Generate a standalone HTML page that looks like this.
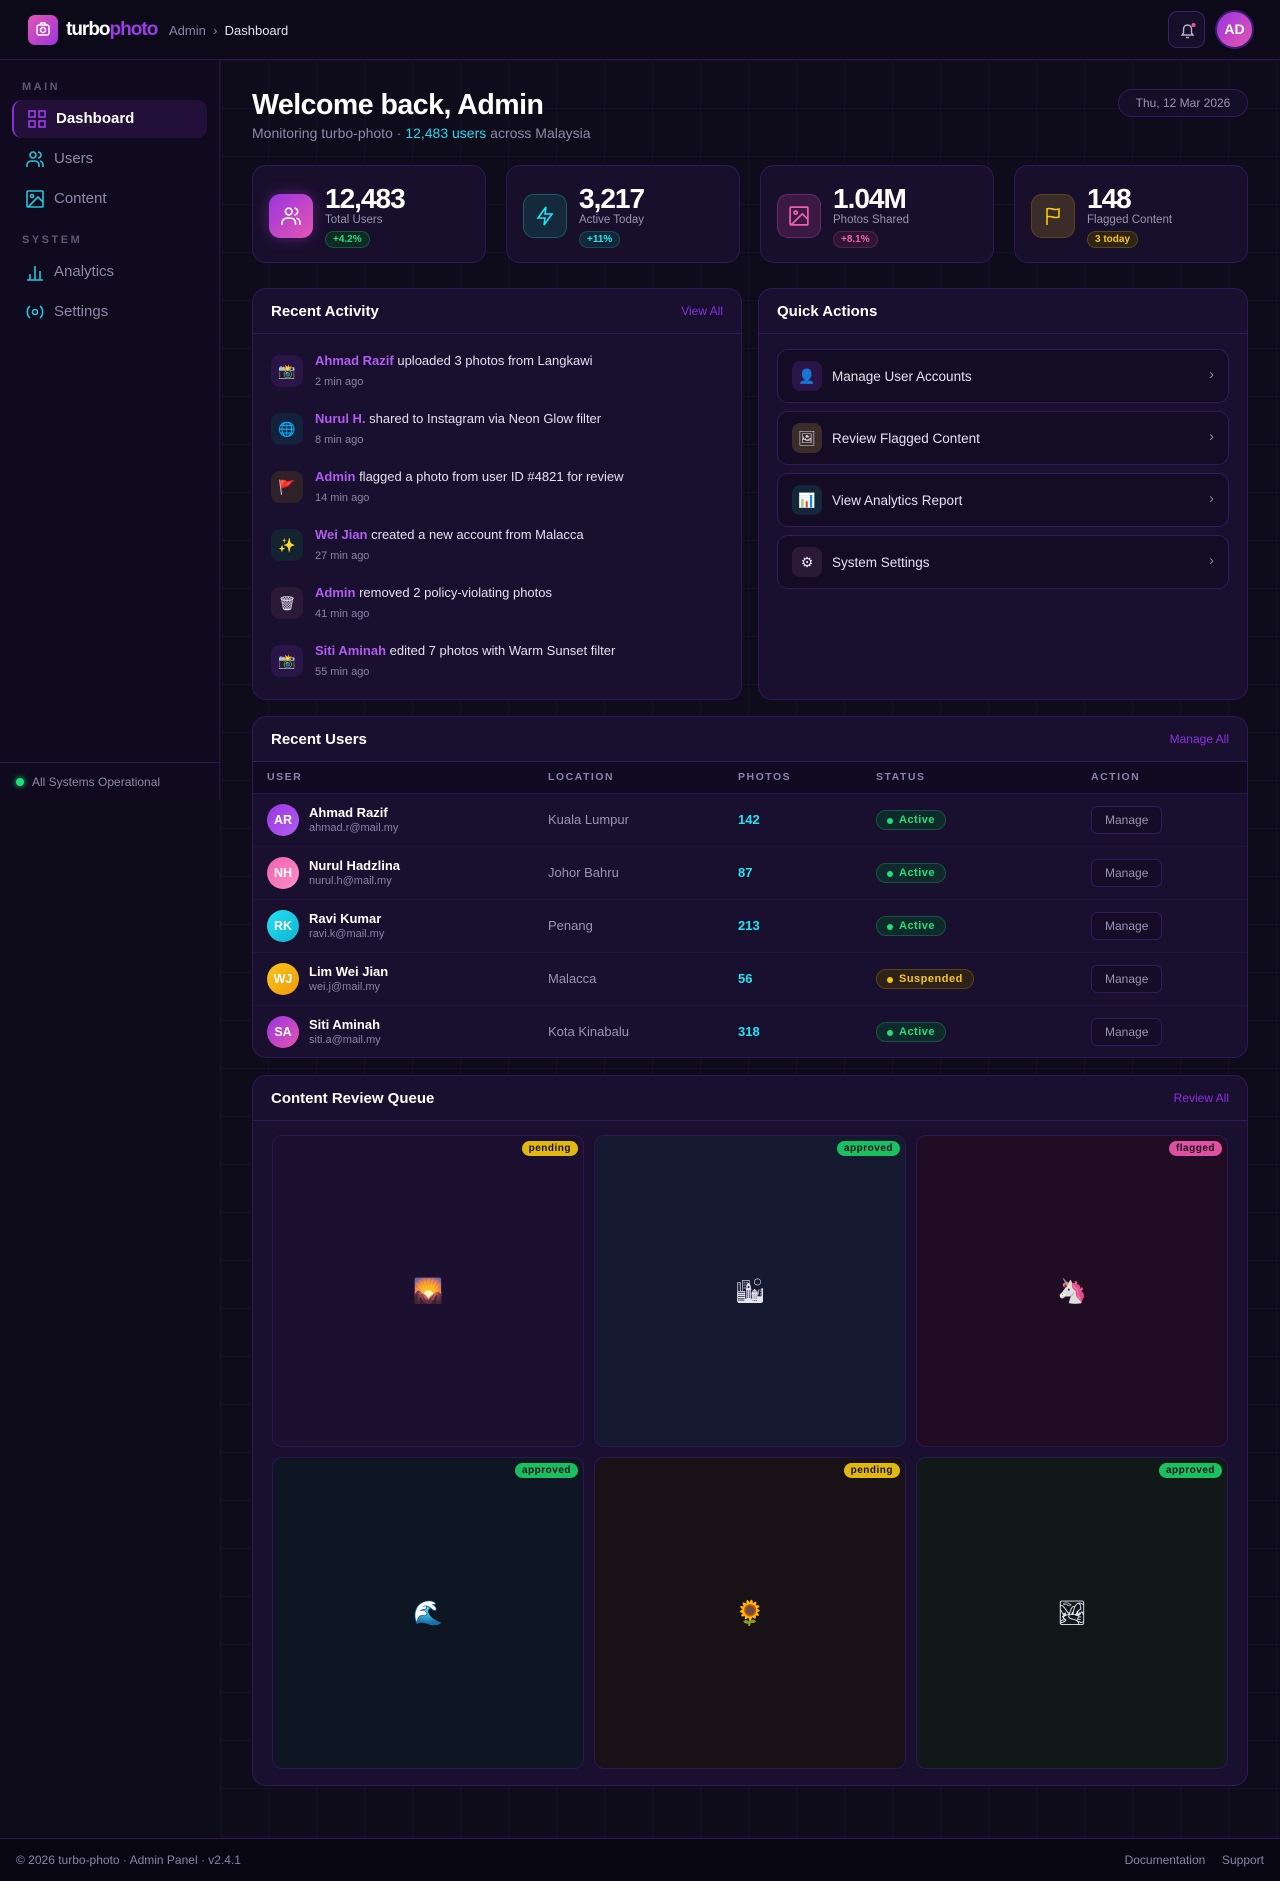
<!DOCTYPE html>
<html><head><meta charset="utf-8">
<style>
*{box-sizing:border-box;margin:0;padding:0}
body{width:1280px;height:1881px;background:#0e0b1b;font-family:"Liberation Sans","DejaVu Sans",sans-serif;color:#e8e4f4;position:relative;overflow:hidden}
.grid{position:absolute;left:220px;top:60px;right:0;bottom:43px;background-image:linear-gradient(rgba(90,50,160,.10) 1px,transparent 1px),linear-gradient(90deg,rgba(90,50,160,.10) 1px,transparent 1px);background-size:48px 48px}
header{position:absolute;left:0;top:0;width:1280px;height:60px;background:#0c0918;border-bottom:1px solid #2c1656}
.logo{position:absolute;left:28px;top:15px;width:30px;height:30px;border-radius:7px;background:linear-gradient(135deg,#e456b0,#9b34e0)}
.brand{position:absolute;left:66px;top:19px;font-size:19px;font-weight:bold;letter-spacing:-1px;color:#fff}
.brand span{color:#9b3ee8}
.crumb{position:absolute;left:169px;top:23px;font-size:13px;color:#8a82a6}
.crumb b{font-weight:normal;color:#e4e0f0}
.bell{position:absolute;left:1168px;top:11px;width:37px;height:37px;border-radius:9px;border:1px solid #3a2166;background:#160f2a}
.av{position:absolute;left:1215px;top:10px;width:39px;height:39px;border-radius:50%;background:linear-gradient(135deg,#9b34e0,#e456b0);border:2px solid #3b1c6e;font-weight:bold;font-size:14px;text-align:center;line-height:35px;color:#fff}
.side{position:absolute;left:0;top:60px;width:220px;height:740px;background:#0f0a1e;border-right:1px solid #24133f}
.sl{position:absolute;left:22px;font-size:11px;font-weight:bold;letter-spacing:2.5px;color:#5e5673}
.si{position:absolute;left:12px;width:195px;height:38px;font-size:15px;color:#8f88a8;padding-left:42px;line-height:38px}
.si svg{position:absolute;left:14px;top:10px}
.si.act{background:#221038;border-left:2px solid #8a2ee0;border-radius:10px;color:#fff;font-weight:bold}
.sfoot{position:absolute;left:0;top:702px;width:220px;border-top:1px solid #2c1656;height:38px;font-size:12px;color:#8f88a8;padding:12px 0 0 32px}
.sfoot i{position:absolute;left:16px;top:15px;width:8px;height:8px;border-radius:50%;background:#1fe07a;box-shadow:0 0 6px #1fe07a}
h1{position:absolute;left:252px;top:89px;font-size:28.5px;color:#fff;letter-spacing:-.5px}
.sub{position:absolute;left:252px;top:125px;font-size:14px;color:#8f88a8}
.sub span{color:#22d9ee}
.date{position:absolute;left:1118px;top:89px;width:130px;height:28px;border:1px solid #34195f;border-radius:14px;background:#150e28;font-size:12px;color:#9a93b2;text-align:center;line-height:26px}
.card{position:absolute;top:165px;width:234px;height:98px;border:1px solid #2e1858;border-radius:14px;background:#170f2c}
.card .ic{position:absolute;left:16px;top:28px;width:44px;height:44px;border-radius:11px;display:flex;align-items:center;justify-content:center}
.card .n{position:absolute;left:72px;top:17px;font-size:28px;font-weight:bold;color:#fff;letter-spacing:-1px}
.card .l{position:absolute;left:72px;top:48px;font-size:11.5px;color:#9a93b2}
.card .b{position:absolute;left:72px;top:65px;font-size:10px;font-weight:bold;padding:2px 7px;border-radius:9px}
.panel{position:absolute;border:1px solid #2e1858;border-radius:14px;background:#190f2e;overflow:hidden}
.ph{height:45px;border-bottom:1px solid #33195f;padding:0 18px;display:flex;align-items:center;justify-content:space-between}
.ph h3{font-size:15px;color:#fff}
.ph a{font-size:12px;color:#8a2ee0}
.item{position:absolute;left:18px;width:460px}
.item .ai{position:absolute;left:0;top:0;width:32px;height:32px;border-radius:9px;font-size:14px;text-align:center;line-height:32px}
.item .t{position:absolute;left:44px;top:-2px;font-size:13px;color:#e4e0f0;white-space:nowrap}
.item .t b{color:#b05cf0}
.item .tm{position:absolute;left:44px;top:21px;font-size:11px;color:#8a82a6}
.qa{position:absolute;left:18px;width:452px;height:54px;border:1px solid #33195f;border-radius:11px;background:#130c24}
.qa .qi{position:absolute;left:14px;top:11px;width:30px;height:30px;border-radius:8px;text-align:center;line-height:30px;font-size:14px}
.qa .qt{position:absolute;left:54px;top:19px;font-size:13.5px;color:#e4e0f0}
.qa .ch{position:absolute;right:14px;top:16px;font-size:15px;color:#8a82a6}
table{border-collapse:collapse;width:100%}
th{height:31px;background:#110b21;font-size:10.5px;letter-spacing:1.5px;color:#8a82a6;text-align:left;font-weight:bold;border-bottom:1px solid #2a1650}
td{height:53px;border-bottom:1px solid #22133f;font-size:13px;color:#9a93b2}
tr:last-child td{border-bottom:none}
.u{display:flex;align-items:center}
.u i{width:32px;height:32px;border-radius:50%;font-style:normal;color:#fff;font-weight:bold;font-size:12.5px;text-align:center;line-height:32px;margin-right:10px}
.u b{display:block;color:#fff;font-size:13px}
.u small{display:block;font-size:11px;color:#8a82a6;margin-top:2px}
.ph2{color:#22e4f2;font-weight:bold}
.st{display:inline-block;font-size:11px;font-weight:bold;padding:3px 10px 3px 22px;border-radius:11px;position:relative;letter-spacing:.5px}
.st:before{content:"";position:absolute;left:10px;top:7px;width:6px;height:6px;border-radius:50%;background:currentColor}
.ok{background:#0f2a2a;border:1px solid #16553f;color:#1fe07a}
.sus{background:#2e2218;border:1px solid #5a4418;color:#f7c615}
.mg{display:inline-block;border:1px solid #33195f;border-radius:6px;padding:6px 13px;font-size:12px;color:#9a93b2;background:#150d28}
.cell{position:absolute;width:312px;height:312px;border:1px solid #2c1656;border-radius:10px;font-size:24px;display:flex;align-items:center;justify-content:center}
.tag{position:absolute;top:5px;right:5px;font-size:10px;font-weight:bold;padding:2px 7px;border-radius:8px;color:#1a1020;letter-spacing:.5px}
footer{position:absolute;left:0;top:1838px;width:1280px;height:43px;background:#0a0714;border-top:1px solid #2c1656;font-size:12px;color:#8a82a6}
</style></head><body>
<div class="grid"></div>
<header>
<div class="logo"><svg width="30" height="30" viewBox="0 0 30 30"><rect x="9" y="10" width="12" height="10" rx="2" fill="none" stroke="#fff" stroke-width="1.5"/><path d="M12 10l1-2h4l1 2" fill="none" stroke="#fff" stroke-width="1.5"/><circle cx="15" cy="15" r="2.5" fill="none" stroke="#fff" stroke-width="1.5"/></svg></div>
<div class="brand">turbo<span>photo</span></div>
<div class="crumb">Admin &nbsp;›&nbsp; <b>Dashboard</b></div>
<div class="bell"><svg width="37" height="37" viewBox="0 0 37 37"><path d="M13 23h11l-1.5-2v-4a4 4 0 0 0-8 0v4z" fill="none" stroke="#b8b0cc" stroke-width="1.4"/><path d="M17 25.5h3" stroke="#b8b0cc" stroke-width="1.4"/><circle cx="24.5" cy="13" r="2" fill="#f050a8"/></svg></div>
<div class="av">AD</div>
</header>
<div class="side">
<div class="sl" style="top:21px">MAIN</div>
<div class="si act" style="top:40px"><svg width="18" height="18" viewBox="0 0 18 18" fill="none" stroke="#9b3ee8" stroke-width="1.6"><rect x="1" y="1" width="6" height="6"/><rect x="11" y="1" width="6" height="6"/><rect x="1" y="11" width="6" height="6"/><rect x="11" y="11" width="6" height="6"/></svg>Dashboard</div>
<div class="si" style="top:80px"><svg width="18" height="18" viewBox="0 0 18 18" fill="none" stroke="#22c8d8" stroke-width="1.6"><circle cx="7" cy="5" r="3"/><path d="M1 17v-2a4 4 0 0 1 4-4h4a4 4 0 0 1 4 4v2M12 2a3 3 0 0 1 0 6M17 17v-2a4 4 0 0 0-3-4"/></svg>Users</div>
<div class="si" style="top:120px"><svg width="18" height="18" viewBox="0 0 18 18" fill="none" stroke="#22c8d8" stroke-width="1.6"><rect x="1" y="1" width="16" height="16" rx="1"/><circle cx="6" cy="6" r="1.5"/><path d="M17 12l-5-5L2 17"/></svg>Content</div>
<div class="sl" style="top:174px">SYSTEM</div>
<div class="si" style="top:193px"><svg width="18" height="18" viewBox="0 0 18 18" fill="none" stroke="#22c8d8" stroke-width="1.6"><path d="M1 17h16M4 17v-6M9 17V3M14 17V8"/></svg>Analytics</div>
<div class="si" style="top:233px"><svg width="18" height="18" viewBox="0 0 18 18" fill="none" stroke="#22c8d8" stroke-width="1.6"><circle cx="9" cy="9" r="2.5"/><path d="M4 3a8 8 0 0 0 0 12M14 3a8 8 0 0 1 0 12"/></svg>Settings</div>
<div class="sfoot"><i></i>All Systems Operational</div>
</div>

<h1>Welcome back, Admin</h1>
<div class="sub">Monitoring turbo-photo · <span>12,483 users</span> across Malaysia</div>
<div class="date">Thu, 12 Mar 2026</div>

<div class="card" style="left:252px"><div class="ic" style="background:linear-gradient(135deg,#9b34e0,#e456b0);box-shadow:0 0 14px rgba(180,60,220,.4)"><svg width="20" height="20" viewBox="0 0 18 18" fill="none" stroke="#fff" stroke-width="1.5"><circle cx="7" cy="5" r="3"/><path d="M1 17v-2a4 4 0 0 1 4-4h4a4 4 0 0 1 4 4v2M12 2a3 3 0 0 1 0 6M17 17v-2a4 4 0 0 0-3-4"/></svg></div><div class="n">12,483</div><div class="l">Total Users</div><div class="b" style="background:#0f2a22;border:1px solid #16553f;color:#1fe07a">+4.2%</div></div>
<div class="card" style="left:506px"><div class="ic" style="background:#142a3c;border:1px solid #1a5a6a"><svg width="20" height="20" viewBox="0 0 20 20" fill="none" stroke="#22e4f2" stroke-width="1.6"><path d="M11 1L3 12h7l-1 7 8-11h-7z"/></svg></div><div class="n">3,217</div><div class="l">Active Today</div><div class="b" style="background:#10283a;border:1px solid #1a4a5a;color:#22e4f2">+11%</div></div>
<div class="card" style="left:760px"><div class="ic" style="background:#3a1a44;border:1px solid #6a2a6a"><svg width="20" height="20" viewBox="0 0 18 18" fill="none" stroke="#f060b0" stroke-width="1.5"><rect x="1" y="1" width="16" height="16" rx="1"/><circle cx="6" cy="6" r="1.5"/><path d="M17 12l-5-5L2 17"/></svg></div><div class="n">1.04M</div><div class="l">Photos Shared</div><div class="b" style="background:#2e1436;border:1px solid #5a2050;color:#f060b0">+8.1%</div></div>
<div class="card" style="left:1014px"><div class="ic" style="background:#3a2c28;border:1px solid #5a4418"><svg width="20" height="20" viewBox="0 0 20 20" fill="none" stroke="#f7c615" stroke-width="1.6"><path d="M4 19V2M4 3c4-2 6 2 12 0v8c-6 2-8-2-12 0"/></svg></div><div class="n">148</div><div class="l">Flagged Content</div><div class="b" style="background:#2e2418;border:1px solid #5a4418;color:#f7c615">3 today</div></div>

<div class="panel" style="left:252px;top:288px;width:490px;height:412px">
<div class="ph"><h3>Recent Activity</h3><a>View All</a></div>
<div class="item" style="top:66px"><div class="ai" style="background:#2a1548">📸</div><div class="t"><b>Ahmad Razif</b> uploaded 3 photos from Langkawi</div><div class="tm">2 min ago</div></div>
<div class="item" style="top:124px"><div class="ai" style="background:#13213c">🌐</div><div class="t"><b>Nurul H.</b> shared to Instagram via Neon Glow filter</div><div class="tm">8 min ago</div></div>
<div class="item" style="top:182px"><div class="ai" style="background:#2e2228">🚩</div><div class="t"><b>Admin</b> flagged a photo from user ID #4821 for review</div><div class="tm">14 min ago</div></div>
<div class="item" style="top:240px"><div class="ai" style="background:#132430">✨</div><div class="t"><b>Wei Jian</b> created a new account from Malacca</div><div class="tm">27 min ago</div></div>
<div class="item" style="top:298px"><div class="ai" style="background:#2a1a38">🗑</div><div class="t"><b>Admin</b> removed 2 policy-violating photos</div><div class="tm">41 min ago</div></div>
<div class="item" style="top:356px"><div class="ai" style="background:#2a1548">📸</div><div class="t"><b>Siti Aminah</b> edited 7 photos with Warm Sunset filter</div><div class="tm">55 min ago</div></div>
</div>

<div class="panel" style="left:758px;top:288px;width:490px;height:412px">
<div class="ph"><h3>Quick Actions</h3></div>
<div class="qa" style="top:60px"><div class="qi" style="background:#2a1548">👤</div><div class="qt">Manage User Accounts</div><div class="ch">›</div></div>
<div class="qa" style="top:122px"><div class="qi" style="background:#3a2c28">🖼</div><div class="qt">Review Flagged Content</div><div class="ch">›</div></div>
<div class="qa" style="top:184px"><div class="qi" style="background:#13263a">📊</div><div class="qt">View Analytics Report</div><div class="ch">›</div></div>
<div class="qa" style="top:246px"><div class="qi" style="background:#2a1a38">⚙</div><div class="qt">System Settings</div><div class="ch">›</div></div>
</div>

<div class="panel" style="left:252px;top:716px;width:996px;height:342px">
<div class="ph"><h3>Recent Users</h3><a>Manage All</a></div>
<table>
<tr><th style="padding-left:14px;width:295px">USER</th><th style="width:190px">LOCATION</th><th style="width:138px">PHOTOS</th><th style="width:215px">STATUS</th><th>ACTION</th></tr>
<tr><td style="padding-left:14px"><div class="u"><i style="background:linear-gradient(135deg,#9b34e0,#b060f0)">AR</i><div><b>Ahmad Razif</b><small>ahmad.r@mail.my</small></div></div></td><td>Kuala Lumpur</td><td class="ph2">142</td><td><span class="st ok">Active</span></td><td><span class="mg">Manage</span></td></tr>
<tr><td style="padding-left:14px"><div class="u"><i style="background:linear-gradient(135deg,#f060b0,#ff90c8)">NH</i><div><b>Nurul Hadzlina</b><small>nurul.h@mail.my</small></div></div></td><td>Johor Bahru</td><td class="ph2">87</td><td><span class="st ok">Active</span></td><td><span class="mg">Manage</span></td></tr>
<tr><td style="padding-left:14px"><div class="u"><i style="background:linear-gradient(135deg,#22e4f2,#10b0d0)">RK</i><div><b>Ravi Kumar</b><small>ravi.k@mail.my</small></div></div></td><td>Penang</td><td class="ph2">213</td><td><span class="st ok">Active</span></td><td><span class="mg">Manage</span></td></tr>
<tr><td style="padding-left:14px"><div class="u"><i style="background:linear-gradient(135deg,#f7c615,#f09a10)">WJ</i><div><b>Lim Wei Jian</b><small>wei.j@mail.my</small></div></div></td><td>Malacca</td><td class="ph2">56</td><td><span class="st sus">Suspended</span></td><td><span class="mg">Manage</span></td></tr>
<tr><td style="padding-left:14px"><div class="u"><i style="background:linear-gradient(135deg,#9b34e0,#e456b0)">SA</i><div><b>Siti Aminah</b><small>siti.a@mail.my</small></div></div></td><td>Kota Kinabalu</td><td class="ph2">318</td><td><span class="st ok">Active</span></td><td><span class="mg">Manage</span></td></tr>
</table>
</div>

<div class="panel" style="left:252px;top:1075px;width:996px;height:711px">
<div class="ph"><h3>Content Review Queue</h3><a>Review All</a></div>
<div class="cell" style="left:19px;top:59px;background:#1b1030">🌄<span class="tag" style="background:#e0b810">pending</span></div>
<div class="cell" style="left:341px;top:59px;background:#151a30">🏙<span class="tag" style="background:#18c060">approved</span></div>
<div class="cell" style="left:663px;top:59px;background:#200d24">🦄<span class="tag" style="background:#e050a0">flagged</span></div>
<div class="cell" style="left:19px;top:381px;background:#0e1624">🌊<span class="tag" style="background:#18c060">approved</span></div>
<div class="cell" style="left:341px;top:381px;background:#181216">🌻<span class="tag" style="background:#e0b810">pending</span></div>
<div class="cell" style="left:663px;top:381px;background:#101818">🏞<span class="tag" style="background:#18c060">approved</span></div>
</div>

<footer><span style="position:absolute;left:16px;top:14px">© 2026 turbo-photo · Admin Panel · v2.4.1</span><span style="position:absolute;right:16px;top:14px">Documentation &nbsp;&nbsp;&nbsp; Support</span></footer>
</body></html>
